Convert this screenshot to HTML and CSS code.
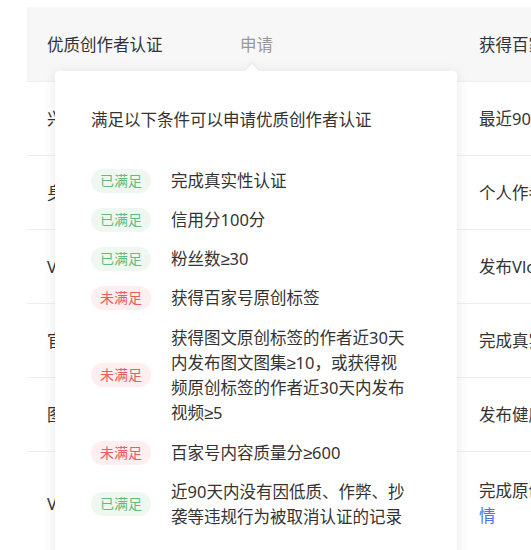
FILE: index.html
```html
<!DOCTYPE html>
<html lang="zh-CN">
<head>
<meta charset="utf-8">
<link rel="stylesheet" href="styles.css">
</head>
<body>
<div class="page">
  <div class="table">
    <div class="row head">
      <div class="cell">优质创作者认证</div>
      <div class="cell apply">申请</div>
      <div class="cell">获得百家号优质创作者标识</div>
    </div>
    <div class="row">
      <div class="cell">兴趣认证</div>
      <div class="cell"></div>
      <div class="cell">最近90天发布领域内容</div>
    </div>
    <div class="row">
      <div class="cell">身份认证</div>
      <div class="cell"></div>
      <div class="cell">个人作者完成身份信息</div>
    </div>
    <div class="row">
      <div class="cell">Vlog认证</div>
      <div class="cell"></div>
      <div class="cell">发布Vlog视频内容</div>
    </div>
    <div class="row">
      <div class="cell">官方认证</div>
      <div class="cell"></div>
      <div class="cell">完成真实性认证</div>
    </div>
    <div class="row">
      <div class="cell">图文认证</div>
      <div class="cell"></div>
      <div class="cell">发布健康优质内容</div>
    </div>
    <div class="row tall">
      <div class="cell">V认证</div>
      <div class="cell"></div>
      <div class="cell wrap">完成原创认证后可申请，查看<a class="link">详情</a></div>
    </div>
  </div>

  <div class="popover">
    <div class="arrow"></div>
    <div class="pop-title">满足以下条件可以申请优质创作者认证</div>
    <ul class="conds">
      <li class="cond"><span class="badge ok">已满足</span><span class="cond-text">完成真实性认证</span></li>
      <li class="cond"><span class="badge ok">已满足</span><span class="cond-text">信用分100分</span></li>
      <li class="cond"><span class="badge ok">已满足</span><span class="cond-text">粉丝数≥30</span></li>
      <li class="cond"><span class="badge no">未满足</span><span class="cond-text">获得百家号原创标签</span></li>
      <li class="cond multi"><span class="badge no">未满足</span><span class="cond-text">获得图文原创标签的作者近30天内发布图文图集≥10，或获得视频原创标签的作者近30天内发布视频≥5</span></li>
      <li class="cond"><span class="badge no">未满足</span><span class="cond-text">百家号内容质量分≥600</span></li>
      <li class="cond"><span class="badge ok">已满足</span><span class="cond-text">近90天内没有因低质、作弊、抄袭等违规行为被取消认证的记录</span></li>
    </ul>
  </div>
</div>
</body>
</html>
```

FILE: styles.css
```css
html, body {
  margin: 0;
  padding: 0;
  background: #fff;
  overflow: hidden;
}
body {
  font-family: "Noto Sans", "Liberation Sans", "Noto Sans CJK SC", sans-serif;
  color: #333;
  font-size: 16.5px;
  line-height: 25px;
}
.page {
  position: relative;
  padding: 7px 0 0 27px;
  width: 760px;
}
.table {
  width: 733px;
}
.row {
  display: grid;
  grid-template-columns: 193px 239px 1fr;
  height: 74px;
  align-items: center;
  border-top: 1px solid #eeeeee;
  box-sizing: border-box;
}
.row.head {
  background: #f7f7f8;
  border-top: none;
}
.row.tall {
  height: auto;
  padding: 26px 0 25px;
}
.cell {
  padding-left: 20px;
  white-space: nowrap;
}
.cell.wrap {
  white-space: normal;
  width: 232px;
  padding-left: 20px;
}
.apply {
  color: #999;
}
.link {
  color: #4e6ef2;
}
.popover {
  position: absolute;
  left: 55px;
  top: 71px;
  width: 402px;
  box-sizing: border-box;
  padding: 36px;
  background: #fff;
  border-radius: 4px;
  box-shadow: 0 2px 14px rgba(0, 0, 0, 0.09);
}
.arrow {
  position: absolute;
  top: -5px;
  left: 192px;
  width: 10px;
  height: 10px;
  background: #fff;
  transform: rotate(45deg);
  box-shadow: -2px -2px 4px rgba(0, 0, 0, 0.04);
}
.pop-title {
  position: relative;
  line-height: 25px;
}
.conds {
  list-style: none;
  margin: 36px 0 0 0;
  padding: 0;
  display: flex;
  flex-direction: column;
  gap: 14px;
}
.cond {
  display: flex;
  align-items: center;
  gap: 20px;
}
.cond.multi {
  margin: 1px 0 1px;
}
.badge {
  flex: none;
  width: 60px;
  height: 24px;
  border-radius: 12px;
  font-size: 14px;
  line-height: 24px;
  text-align: center;
}
.badge.ok {
  background: #eef8f1;
  color: #62bd7d;
}
.badge.no {
  background: #fdeff0;
  color: #ec5b62;
}
.cond-text {
  width: 240px;
  line-height: 25px;
}
```
